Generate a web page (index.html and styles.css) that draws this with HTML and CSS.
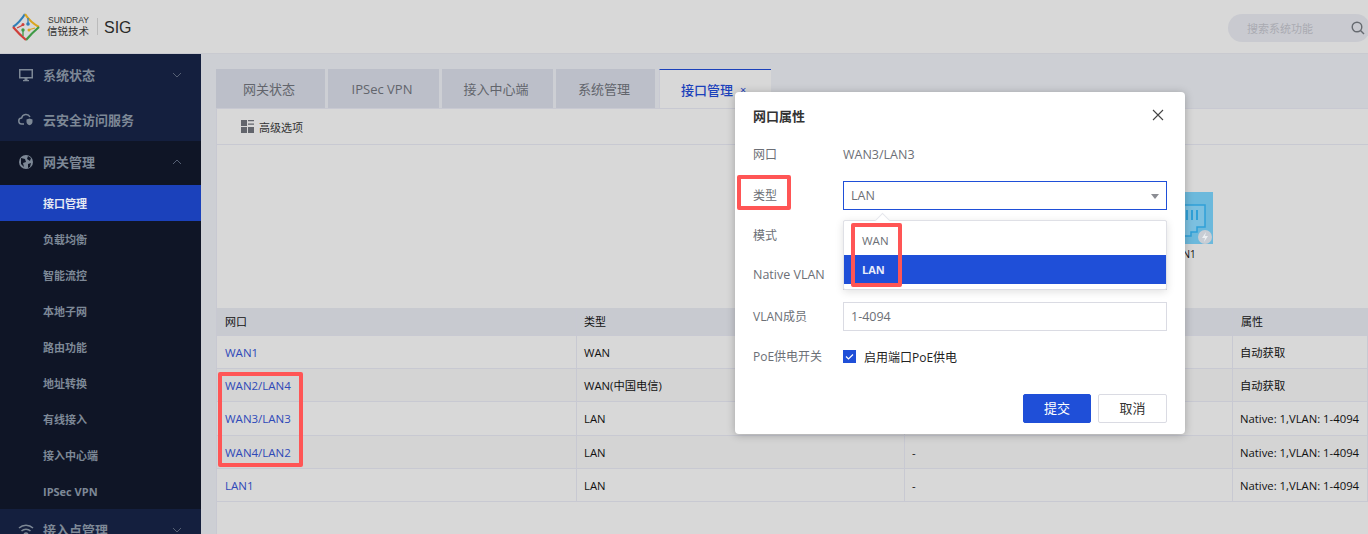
FILE: index.html
```html
<!doctype html>
<html lang="en">
  <head>
    <meta charset="UTF-8" />
    <title>SIG</title>
    <link rel="stylesheet" href="styles.css">
  </head>
  <body>
    <header class="topbar">
      <svg class="logo" width="28" height="28" viewBox="0 0 28 28" fill="none">
        <path d="M1 14 Q8 9 13 1" stroke="#2f7fb8" stroke-width="2.2"/>
        <path d="M13 1 Q18 9 27 14" stroke="#d9a520" stroke-width="2.2"/>
        <path d="M27 14 Q20 20 14 27" stroke="#3f9a46" stroke-width="2.2"/>
        <path d="M14 27 Q7 21 1 14" stroke="#cf3f3a" stroke-width="2.2"/>
        <path d="M5 15 L11 12" stroke="#cf3f3a" stroke-width="1.3"/>
        <path d="M16 5 L16 11" stroke="#2f7fb8" stroke-width="1.3"/>
        <path d="M16 17 L23 15" stroke="#d9a520" stroke-width="1.3"/>
        <path d="M11 17 L11 23" stroke="#3f9a46" stroke-width="1.3"/>
        <circle cx="16" cy="11" r="1.8" fill="#2f7fb8"/>
        <circle cx="11" cy="11.500" r="1.500" fill="#cf3f3a"/>
        <circle cx="17" cy="17" r="1.500" fill="#d9a520"/>
        <circle cx="11" cy="17" r="1.700" fill="#3f9a46"/>
      </svg>
      <div class="brand">
        <span class="brand-en">SUNDRAY</span>
        <span class="brand-cn">信锐技术</span>
      </div>
      <div class="brand-line"></div>
      <div class="brand-sig">SIG</div>
      <div class="search">
        <span>搜索系统功能</span>
        <svg width="14" height="14" viewBox="0 0 14 14" fill="none" stroke="#666a70" stroke-width="1.4">
          <circle cx="6" cy="6" r="4.800"/>
          <path d="M9.500 9.500l3.500 3.500"/>
        </svg>
      </div>
    </header>

    <div class="layout">
      <nav class="sidebar">
        <div class="nav-head nav-head-a">
          <svg width="16" height="16" viewBox="0 0 16 16" fill="#7d8896"><path d="M1 2h14v9.500H1zM2.500 3.500v6.500h11V3.500zM6.500 11.500h3V13H11v1.300H5V13h1.500z" fill-rule="evenodd"/></svg>
          <span>系统状态</span>
          <svg class="chev" width="10" height="6" viewBox="0 0 10 6"><path d="M1 1l4 4 4-4"/></svg>
        </div>
        <div class="nav-head">
          <svg width="16" height="16" viewBox="0 0 16 16" fill="none" stroke="#7d8896" stroke-width="1.5"><path d="M6 13H4a3 3 0 0 1-.4-6A4.500 4.500 0 0 1 12 6"/><path d="M11.500 7.500l3 1v2.500c0 1.500-1.300 2.500-3 3.300-1.700-.8-3-1.800-3-3.300V8.500z" fill="#7d8896" stroke="none"/></svg>
          <span>云安全访问服务</span>
        </div>
        <div class="nav-open">
          <div class="nav-head nav-lift">
            <svg width="16" height="16" viewBox="0 0 16 16"><circle cx="8" cy="8" r="7" fill="#7d8896"/><path d="M3 4l4 1 1 3-3 1 1 4-3-3zM10 2l3 2-1 3-3-2zM10 10l3-1-1 4-2 1z" fill="#0f1526"/></svg>
            <span>网关管理</span>
            <svg class="chev" width="10" height="6" viewBox="0 0 10 6"><path d="M1 5l4-4 4 4"/></svg>
          </div>
          <a class="nav-sub active">接口管理</a>
          <a class="nav-sub">负载均衡</a>
          <a class="nav-sub">智能流控</a>
          <a class="nav-sub">本地子网</a>
          <a class="nav-sub">路由功能</a>
          <a class="nav-sub">地址转换</a>
          <a class="nav-sub">有线接入</a>
          <a class="nav-sub">接入中心端</a>
          <a class="nav-sub">IPSec VPN</a>
        </div>
        <div class="nav-head nav-lift">
          <svg width="16" height="16" viewBox="0 0 16 16" fill="none" stroke="#7d8896" stroke-width="1.5"><path d="M1 6a10 10 0 0 1 14 0M3.500 9a6.500 6.500 0 0 1 9 0M6 12a3 3 0 0 1 4 0"/></svg>
          <span>接入点管理</span>
          <svg class="chev" width="10" height="6" viewBox="0 0 10 6"><path d="M1 1l4 4 4-4"/></svg>
        </div>
      </nav>

      <main class="content">
        <div class="tabs">
          <div class="tab tab-1">网关状态</div>
          <div class="tab tab-2">IPSec VPN</div>
          <div class="tab tab-3">接入中心端</div>
          <div class="tab tab-4">系统管理</div>
          <div class="tab tab-on">接口管理<span class="tab-x">×</span></div>
        </div>
        <div class="panel">
          <div class="toolbar">
            <svg width="13" height="13" viewBox="0 0 13 13" fill="#62656c"><path d="M0 0h6v6H0zM0 7h6v6H0zM7 7h6v6H7zM7 0h6v1.300H7zM7 3.500h6v1.300H7z"/></svg>
            <span>高级选项</span>
          </div>
          <div class="ports">
            <div class="port">
              <div class="port-icon">
                <svg width="42" height="52" viewBox="0 0 42 52">
                  <rect width="42" height="52" fill="#6cb9dc"/>
                  <path d="M0 13h34v22h-8v5h-6v4H0" fill="#7cc0e0" stroke="#2fa0d8" stroke-width="1.500"/>
                  <path d="M15 18h2v10h-2zM20 18h2v10h-2zM25 18h2v10h-2z" fill="#2fa0d8"/>
                  <circle cx="34" cy="45" r="7" fill="#c8cdd4"/>
                  <path d="M35 40l-4 6h3l-1 4 4-6h-3z" fill="#eceff2"/>
                </svg>
              </div>
              <div class="port-name">LAN1</div>
            </div>
          </div>
          <div class="grid">
            <div class="row row-head">
              <div>网口</div><div>类型</div><div></div><div>属性</div>
            </div>
            <div class="row">
              <div class="link">WAN1</div><div>WAN</div><div></div><div>自动获取</div>
            </div>
            <div class="row alt">
              <div class="link">WAN2/LAN4</div><div>WAN(中国电信)</div><div></div><div>自动获取</div>
            </div>
            <div class="row row-tall">
              <div class="link">WAN3/LAN3</div><div>LAN</div><div></div><div>Native: 1,VLAN: 1-4094</div>
            </div>
            <div class="row alt">
              <div class="link">WAN4/LAN2</div><div>LAN</div><div>-</div><div>Native: 1,VLAN: 1-4094</div>
            </div>
            <div class="row">
              <div class="link">LAN1</div><div>LAN</div><div>-</div><div>Native: 1,VLAN: 1-4094</div>
            </div>
          </div>
        </div>
      </main>
    </div>

    <div class="dialog">
      <div class="dialog-head">
        <span>网口属性</span>
        <svg width="12" height="12" viewBox="0 0 12 12" fill="none" stroke="#444" stroke-width="1.100"><path d="M1 1l10 10M11 1L1 11"/></svg>
      </div>
      <div class="form-row form-plain"><label>网口</label><div>WAN3/LAN3</div></div>
      <div class="form-row">
        <label>类型</label>
        <div class="field field-on">LAN<i class="caret"></i></div>
      </div>
      <div class="form-row"><label>模式</label><div class="field"></div></div>
      <div class="form-row form-wide"><label class="label-en">Native VLAN</label><div class="field"></div></div>
      <div class="form-row"><label>VLAN成员</label><div class="field">1-4094</div></div>
      <div class="form-row form-check">
        <label>PoE供电开关</label>
        <div class="check">
          <svg width="13" height="13" viewBox="0 0 13 13"><rect width="13" height="13" fill="#1f4fd8"/><path d="M3 6.500l2.500 2.500L10 4.500" fill="none" stroke="#fff" stroke-width="1.200"/></svg>
          <span>启用端口PoE供电</span>
        </div>
      </div>
      <div class="dialog-foot">
        <button class="btn btn-main">提交</button>
        <button class="btn">取消</button>
      </div>
      <div class="dropdown">
        <div class="option">WAN</div>
        <div class="option option-on">LAN</div>
      </div>
    </div>

    <div class="mark mark-label"></div>
    <div class="mark mark-option"></div>
    <div class="mark mark-rows"></div>
  </body>
</html>
```

FILE: styles.css
```css
:root {
  --blue: #1f4fd8;
  --line: #c8c9d2;
  --mark: #ff5555;
}
* {
  box-sizing: border-box;
}
body {
  margin: 0;
  height: 100vh;
  overflow: hidden;
  position: relative;
  background-color: #cdcfd4;
  font-family: "Open Sans", "Noto Sans CJK SC", sans-serif;
  font-size: 12px;
  color: #111;
}

/* top bar */
.topbar {
  height: 54px;
  display: flex;
  align-items: center;
  padding: 3px 0 0 12px;
  background-color: #d8d8d8;
  border-bottom: 1px solid #c9cad0;
  overflow: hidden;
}
.logo {
  margin-top: -2px;
}
.brand {
  margin: -3px 0 0 7px;
  display: flex;
  flex-direction: column;
  color: #333;
}
.brand-en {
  font-family: "Liberation Sans", sans-serif;
  font-size: 8.500px;
  line-height: 10px;
  padding-left: 1px;
}
.brand-cn {
  font-size: 10.500px;
  line-height: 13px;
}
.brand-line {
  width: 1px;
  height: 17px;
  margin: -3px 6px 0 8px;
  background-color: #bbb;
}
.brand-sig {
  font-family: "Liberation Sans", sans-serif;
  font-size: 16px;
  color: #2a2a2a;
}
.search {
  margin-left: auto;
  width: 142px;
  margin-right: -2px;
  height: 28px;
  padding: 0 5px 0 19px;
  display: flex;
  justify-content: space-between;
  align-items: center;
  background-color: #c9cad0;
  border-radius: 14px;
  color: #a9abb2;
  font-size: 11px;
}
.search svg {
  flex-shrink: 0;
}

.layout {
  display: flex;
  height: 480px;
}

/* side menu */
.sidebar {
  width: 201px;
  flex-shrink: 0;
  background-color: #141f3e;
  color: #7d8896;
  overflow: hidden;
}
.nav-head {
  height: 44px;
  padding-left: 18px;
  display: flex;
  align-items: center;
  font-size: 13px;
  font-weight: 700;
}
.nav-head > span {
  margin-left: 9px;
}
.nav-head-a {
  height: 43px;
  padding-bottom: 2px;
}
.nav-lift {
  padding-bottom: 3px;
}
.nav-head .chev {
  margin-left: auto;
  margin-right: 19px;
  fill: none;
  stroke: #566074;
  stroke-width: 1;
}
.nav-open {
  background-color: #0f1526;
}
.nav-sub {
  display: block;
  height: 36px;
  line-height: 38px;
  padding-left: 43px;
  font-size: 11px;
  font-weight: 700;
}
.nav-sub.active {
  background-color: #1b41bb;
  color: #e6e9f3;
}

/* main area */
.content {
  flex: 1;
  padding: 15px 0 0 15px;
  min-width: 0;
}
.tabs {
  display: flex;
  gap: 3px;
  height: 39px;
}
.tab {
  height: 39px;
  padding-right: 3px;
  display: flex;
  align-items: center;
  justify-content: center;
  background-color: #bcbfc9;
  color: #62656c;
  font-size: 13px;
}
.tab-1 {
  width: 109px;
}
.tab-2 {
  width: 111px;
}
.tab-3 {
  width: 111px;
}
.tab-4 {
  width: 99px;
}
.tab-on {
  width: 112px;
  margin-left: 1px;
  background-color: #d8d8d8;
  border-top: 1px solid #1b41bb;
  border-left: 1px solid var(--line);
  color: #1b41bb;
  font-weight: 500;
  justify-content: flex-start;
  padding-left: 21px;
}
.tab-x {
  margin-left: 7px;
  font-size: 11px;
  font-weight: 400;
}
.panel {
  height: 426px;
  background-color: #d8d8d8;
  border-top: 1px solid var(--line);
  border-left: 1px solid var(--line);
}
.toolbar {
  height: 36px;
  padding-left: 24px;
  display: flex;
  align-items: center;
  gap: 5px;
  font-size: 11px;
  color: #333;
  border-bottom: 1px solid var(--line);
}
.ports {
  height: 163px;
  padding-top: 47px;
  padding-left: 954px;
}
.port {
  width: 60px;
}
.port-icon {
  width: 42px;
  height: 52px;
}
.port-name {
  margin-top: 3px;
  font-size: 10px;
}

/* table */
.row {
  display: grid;
  grid-template-columns: 360px 328px 328px 1fr;
  height: 33px;
  align-items: stretch;
  border-bottom: 1px solid var(--line);
}
.row > div {
  display: flex;
  align-items: center;
  padding-left: 7px;
  border-right: 1px solid var(--line);
  font-size: 11.300px;
}
.row > .link {
  padding-left: 8px;
  font-size: 11.500px;
  color: #2f49b8;
}
.row-head {
  height: 28px;
  background-color: #c8cad0;
}
.row-head > div {
  padding-bottom: 2px;
  font-size: 11px;
}
.row-head > div:first-child {
  padding-left: 8px;
}
.row-head > div:last-child {
  padding-left: 8px;
}
.row-tall {
  height: 34px;
}
.alt {
  background-color: #d4d4d4;
}

/* dialog */
.dialog {
  position: absolute;
  left: 735px;
  top: 92px;
  width: 450px;
  height: 342px;
  padding: 0 18px;
  background-color: #fff;
  border-radius: 4px;
  box-shadow: 0 1px 8px rgba(0, 0, 0, 0.25);
  color: #6c6f76;
}
.dialog-head {
  height: 48px;
  display: flex;
  justify-content: space-between;
  align-items: center;
  font-size: 13px;
  font-weight: 700;
  color: #333;
  padding: 0 3px 2px 0;
}
.form-row {
  height: 29px;
  margin-bottom: 11px;
  display: flex;
  align-items: center;
}
.form-row label {
  width: 90px;
  flex-shrink: 0;
  margin-top: -2px;
  font-size: 12px;
}
.form-row .label-en {
  font-size: 12.500px;
}
.form-plain {
  height: 28px;
  margin-bottom: 13px;
  font-size: 12.500px;
}
.form-plain label {
  margin-top: 0;
}
.form-wide {
  margin-bottom: 12px;
}
.form-check {
  margin-top: 13px;
  height: 25px;
}
.field {
  flex: 1;
  height: 29px;
  padding-left: 7px;
  position: relative;
  display: flex;
  align-items: center;
  border: 1px solid #dadbe3;
  font-size: 12.500px;
}
.field-on {
  border-color: var(--blue);
}
.caret {
  position: absolute;
  right: 7px;
  top: 12px;
  border: 4px solid transparent;
  border-top: 5px solid #8b8d93;
  border-bottom: 0;
}
.check {
  display: flex;
  align-items: center;
  gap: 8px;
  color: #222;
  font-size: 12px;
}
.check svg {
  flex-shrink: 0;
}
.dialog-foot {
  display: flex;
  justify-content: flex-end;
  gap: 7px;
  margin-top: 25px;
}
.btn {
  width: 69px;
  height: 29px;
  padding: 0 0 2px;
  background-color: #fff;
  border: 1px solid #dadbe3;
  border-radius: 2px;
  font-family: inherit;
  font-size: 13px;
  color: #333;
}
.btn-main {
  width: 68px;
  background-color: var(--blue);
  border-color: var(--blue);
  color: #fff;
}
.dropdown {
  position: absolute;
  left: 108px;
  top: 128px;
  width: 324px;
  height: 70px;
  padding-top: 2px;
  background-color: #fff;
  border: 1px solid #dfe0e6;
  border-radius: 2px;
  box-shadow: 0 2px 8px rgba(0, 0, 0, 0.12);
}
.dropdown::before {
  content: "";
  position: absolute;
  left: 33px;
  top: -6px;
  width: 10px;
  height: 10px;
  background-color: #fff;
  transform: rotate(45deg);
  border-top: 1px solid #e6e7ec;
  border-left: 1px solid #e6e7ec;
}
.option {
  height: 32px;
  padding: 3px 0 0 18px;
  display: flex;
  align-items: center;
  font-size: 11.500px;
  position: relative;
}
.option-on {
  height: 29px;
  padding-top: 0;
  background-color: var(--blue);
  color: #e8ecfa;
  font-size: 11px;
  font-weight: 700;
}

/* red marks drawn over the shot */
.mark {
  position: absolute;
  border: 4px solid var(--mark);
  border-radius: 2px;
}
.mark-label {
  left: 737px;
  top: 175px;
  width: 54px;
  height: 35px;
}
.mark-option {
  left: 851px;
  top: 223px;
  width: 51px;
  height: 64px;
}
.mark-rows {
  left: 218px;
  top: 372px;
  width: 85px;
  height: 95px;
}
```
